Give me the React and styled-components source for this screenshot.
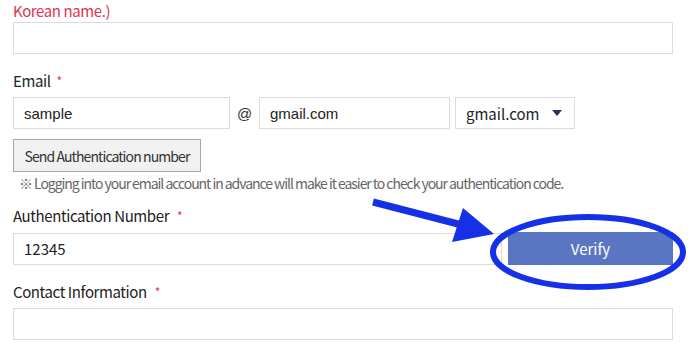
import React from 'react';
import styled, { createGlobalStyle } from 'styled-components';

const GlobalStyle = createGlobalStyle`
  html, body {
    margin: 0;
    padding: 0;
    background: #fff;
  }
  body {
    font-family: "Noto Sans CJK KR", "Noto Sans", sans-serif;
    color: #222;
  }
`;

const Page = styled.div`
  position: relative;
  width: 700px;
  height: 350px;
  overflow: hidden;
`;

const Form = styled.div`
  display: flex;
  flex-direction: column;
  padding: 0 27px 0 13px;
`;

const Notice = styled.div`
  color: #e0344f;
  font-size: 15px;
  line-height: 22px;
  letter-spacing: -0.4px;
  margin-top: 0;
`;

const Label = styled.div`
  display: flex;
  align-items: center;
  gap: ${p => p.$gap || 6}px;
  font-size: 15px;
  line-height: 22px;
  letter-spacing: -0.4px;
  color: #222;
  margin-top: ${p => p.$top}px;
  margin-bottom: ${p => p.$bottom || 5}px;
`;

const Star = styled.span`
  color: #e0344f;
  font-size: 12px;
  line-height: 12px;
`;

const Input = styled.div`
  box-sizing: border-box;
  height: 32px;
  width: ${p => (p.$width ? `${p.$width}px` : 'auto')};
  flex: ${p => (p.$grow ? '1' : 'none')};
  border: 1px solid #dcdcdc;
  background: #fff;
  display: flex;
  align-items: center;
  padding-left: 10px;
  font-family: ${p => (p.$sys ? '"Liberation Sans", Arial, sans-serif' : '"Noto Sans CJK KR", "Noto Sans", sans-serif')};
  font-size: 15px;
  color: #222;
`;

const Row = styled.div`
  display: flex;
  align-items: center;
`;

const At = styled.span`
  width: 29px;
  text-align: center;
  font-family: "Liberation Sans", Arial, sans-serif;
  font-size: 15px;
  color: #333;
`;

const Select = styled(Input)`
  margin-left: 5px;
  justify-content: space-between;
  padding-right: 12px;
`;

const Caret = styled.span`
  width: 0;
  height: 0;
  border-left: 5px solid transparent;
  border-right: 5px solid transparent;
  border-top: 6px solid #1f3658;
`;

const SendButton = styled.button`
  align-self: flex-start;
  box-sizing: border-box;
  height: 33px;
  width: 188px;
  margin-top: 10px;
  padding: 0;
  background: #f1f1f1;
  border: 1px solid #a8a8a8;
  border-radius: 0;
  font-family: "Noto Sans CJK KR", "Noto Sans", sans-serif;
  font-size: 14px;
  letter-spacing: -0.9px;
  color: #333;
`;

const Note = styled.div`
  margin-top: 1px;
  padding-left: 6px;
  font-size: 14px;
  line-height: 20px;
  letter-spacing: -1.05px;
  color: #666;
  white-space: nowrap;
`;

const VerifyButton = styled.button`
  box-sizing: border-box;
  height: 33px;
  width: 165px;
  margin-left: 6px;
  border: none;
  border-radius: 0;
  background: #5a76c3;
  color: #fff;
  font-family: "Noto Sans CJK KR", "Noto Sans", sans-serif;
  font-size: 15px;
`;

const Markup = styled.svg`
  position: absolute;
  left: 0;
  top: 0;
  pointer-events: none;
`;

const App = () => (
  <Page>
    <GlobalStyle />
    <Form>
      <Notice>Korean name.)</Notice>
      <Input />

      <Label $top={16}>
        Email <Star>*</Star>
      </Label>
      <Row>
        <Input $width={217} $sys>sample</Input>
        <At>@</At>
        <Input $width={191} $sys>gmail.com</Input>
        <Select $width={120}>
          gmail.com
          <Caret />
        </Select>
      </Row>
      <SendButton>Send Authentication number</SendButton>
      <Note>※ Logging into your email account in advance will make it easier to check your authentication code.</Note>

      <Label $top={12} $gap={8}>
        Authentication Number <Star>*</Star>
      </Label>
      <Row>
        <Input $grow>12345</Input>
        <VerifyButton>Verify</VerifyButton>
      </Row>

      <Label $top={16} $gap={8}>
        Contact Information <Star>*</Star>
      </Label>
      <Input />
    </Form>

    <Markup width="700" height="350" viewBox="0 0 700 350">
      <line x1="373" y1="202" x2="462" y2="225" stroke="#1530e6" strokeWidth="7" />
      <polygon points="463,208 452,242 494,234" fill="#1530e6" />
      <ellipse cx="588" cy="252" rx="95" ry="35" fill="none" stroke="#1530e6" strokeWidth="6" />
    </Markup>
  </Page>
);

export default App;
